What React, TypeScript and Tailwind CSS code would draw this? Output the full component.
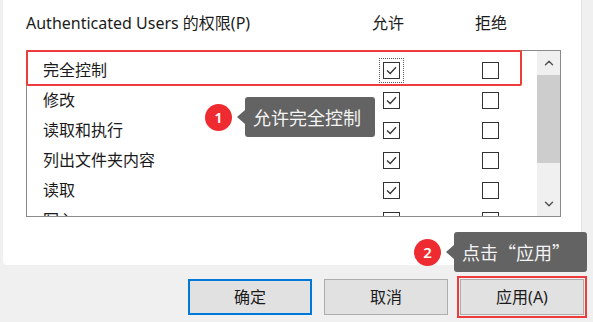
import { ChevronUp, ChevronDown } from "lucide-react";

const rows = [
  { name: "完全控制", allow: true, focus: true },
  { name: "修改", allow: true },
  { name: "读取和执行", allow: true },
  { name: "列出文件夹内容", allow: true },
  { name: "读取", allow: true },
  { name: "写入", allow: false },
];

function Box({ checked, focus }: { checked: boolean; focus?: boolean }) {
  return (
    <span
      className={
        focus
          ? "flex p-[3px] border border-dotted border-[#5a5a5a]"
          : "flex p-[3px] border border-transparent"
      }
    >
      <span className="flex h-[17px] w-[17px] items-center justify-center border border-[#333] bg-white">
        {checked && (
          <svg width="13" height="13" viewBox="0 0 13 13" fill="none">
            <path d="M2 6.5 L5.2 9.5 L11 3.2" stroke="#333" strokeWidth="1.3" />
          </svg>
        )}
      </span>
    </span>
  );
}

function Tip({ n, text, x, y, w }: { n: number; text: string; x: number; y: number; w: number }) {
  return (
    <div className="absolute flex items-center" style={{ left: x, top: y }}>
      <span className="flex h-[27px] w-[27px] items-center justify-center rounded-full bg-[#ee2b30] text-[15px] font-semibold text-white">
        {n}
      </span>
      <span className="ml-[5px] h-0 w-0 border-y-[7px] border-r-[8px] border-y-transparent border-r-[#5b5b5b]/95" />
      <span
        className="flex h-[40px] items-center rounded-[3px] bg-[#5b5b5b]/95 pl-[8px] font-['Noto_Sans_CJK_SC',sans-serif] text-[18px] text-[#f4f4f4]"
        style={{ width: w }}
      >
        {text}
      </span>
    </div>
  );
}

export default function App() {
  return (
    <div
      className="relative h-[322px] w-[593px] overflow-hidden bg-[#f0f0f0] text-[#1b1b1b]"
      style={{ fontFamily: '"Noto Sans", "Noto Sans CJK SC", sans-serif' }}
    >
      {/* tab page */}
      <div className="ml-[3px] h-[265px] w-[579px] rounded-bl-[4px] border-r border-[#e4e4e4] bg-white">
        <div className="flex h-[24px] items-center pl-[23px] pt-[22px] text-[16px] leading-[24px]">
          <span className="w-[346px]">Authenticated Users 的权限(P)</span>
          <span className="w-[103px]">允许</span>
          <span>拒绝</span>
        </div>

        <div className="ml-[23px] mt-[26px] flex h-[167px] w-[535px] border border-[#8a8a8a]">
          <div className="flex-1 overflow-hidden pt-[4px] text-[16px]">
            {rows.map((r) => (
              <div key={r.name} className="flex h-[30px] items-center">
                <span className="w-[352px] pl-[16px]">{r.name}</span>
                <Box checked={r.allow} focus={r.focus} />
                <span className="ml-[74px]">
                  <Box checked={false} />
                </span>
              </div>
            ))}
          </div>
          <div className="flex w-[23px] flex-col bg-[#f0f0f0]">
            <div className="flex h-[24px] items-center justify-center text-[#555]">
              <ChevronUp size={14} strokeWidth={2.5} />
            </div>
            <div className="h-[88px] bg-[#cdcdcd]" />
            <div className="flex-1" />
            <div className="flex h-[24px] items-center justify-center text-[#555]">
              <ChevronDown size={14} strokeWidth={2.5} />
            </div>
          </div>
        </div>
      </div>

      {/* buttons */}
      <div className="mt-[14px] flex gap-[12px] pl-[188px] text-[16px]">
        <button className="h-[36px] w-[124px] border-2 border-[#0078d7] bg-[#e1e1e1]">确定</button>
        <button className="h-[36px] w-[124px] border border-[#adadad] bg-[#e1e1e1]">取消</button>
        <button className="h-[36px] w-[124px] border border-[#adadad] bg-[#e1e1e1] outline-2 outline-offset-[1px] outline-[#ee3b3b]">
          应用(A)
        </button>
      </div>

      {/* annotations */}
      <div className="absolute left-[26px] top-[50px] h-[36px] w-[496px] rounded-[2px] border-2 border-[#ee3b3b]" />
      <Tip n={1} text="允许完全控制" x={205} y={97} w={130} />
      <Tip n={2} text="点击“应用”" x={414} y={232} w={133} />
    </div>
  );
}
